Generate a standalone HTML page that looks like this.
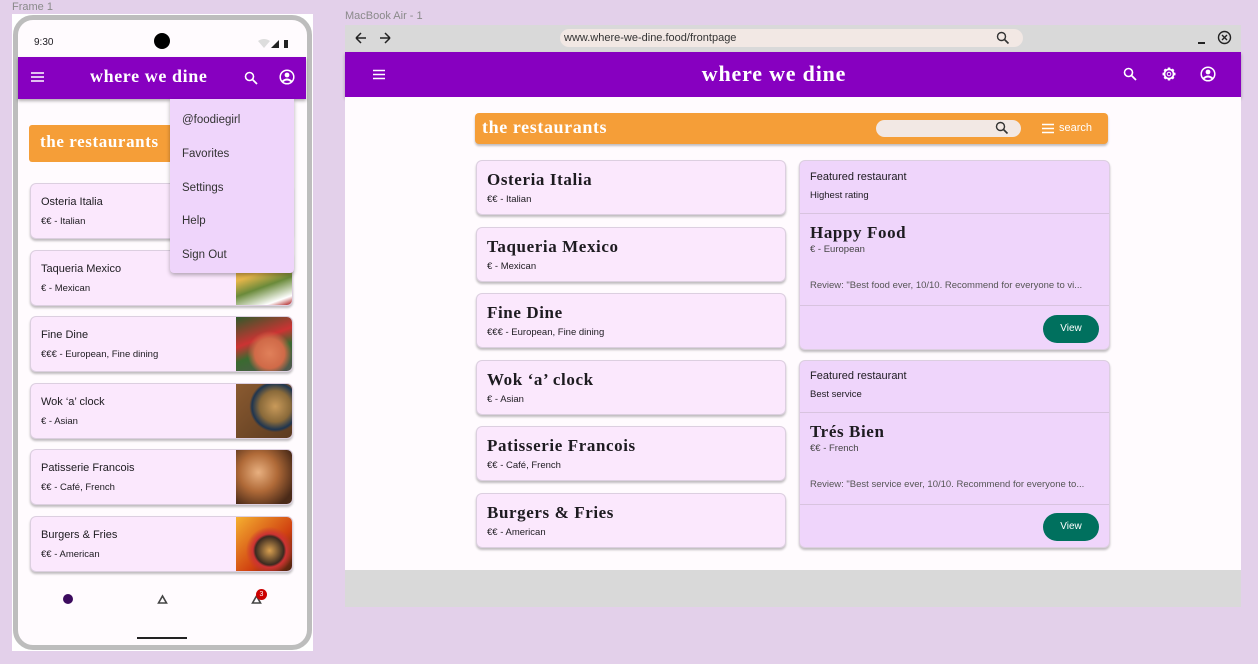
<!DOCTYPE html>
<html><head><meta charset="utf-8"><style>
*{box-sizing:border-box;margin:0;padding:0}
body{width:1258px;height:664px;background:#e3d0ea;font-family:"Liberation Sans",sans-serif;position:relative;overflow:hidden;color:#1d1b20}
.a{position:absolute}
.lbl{font-size:11px;color:#8a8a8a}
.serif{font-family:"Liberation Serif",serif;font-weight:bold}
.pc{position:absolute;left:30px;width:263px;height:56px;background:#fbe8fd;border:1px solid #dccfe0;border-radius:6px;box-shadow:0 2px 2px rgba(0,0,0,.25);overflow:hidden}
.pc .t{position:absolute;left:10px;top:12px;font-size:11px}
.pc .s{position:absolute;left:10px;top:32px;font-size:9.5px}
.pc .im{position:absolute;right:0;top:0;width:56px;height:56px}
.lc{position:absolute;left:476px;width:310px;height:55px;background:#fbe8fd;border:1px solid #dccfe0;border-radius:6px;box-shadow:0 2px 2px rgba(0,0,0,.25)}
.lc .t{position:absolute;left:10px;top:9px;font-size:17px;font-family:"Liberation Serif",serif;font-weight:bold;letter-spacing:.6px}
.lc .s{position:absolute;left:10px;top:33px;font-size:9.5px}
.fc{position:absolute;left:799px;width:311px;background:#efd5fb;border:1px solid #dccfe0;border-radius:6px;box-shadow:0 2px 2px rgba(0,0,0,.25)}
.fc .d{position:absolute;left:0;right:0;height:1px;background:#d8c3df}
.mi{position:absolute;left:12px;font-size:11.5px;color:#333}
.btn{position:absolute;right:10px;bottom:6px;width:56px;height:28px;border-radius:14px;background:#00705e;color:#fff;font-size:10px;text-align:center;line-height:28px}
</style></head><body>
<div class="a lbl" style="left:12px;top:1px">Frame 1</div>
<div class="a" style="left:12px;top:14px;width:301px;height:637px;background:#fff"></div>
<div class="a" style="left:13px;top:15px;width:299px;height:635px;border:5px solid #bdbdbd;border-radius:20px;background:#fffbfe"></div>
<div class="a" style="left:34px;top:37px;font-size:10px">9:30</div>
<div class="a" style="left:154px;top:33px;width:16px;height:16px;border-radius:50%;background:#000"></div>
<svg class="a" style="left:257px;top:37px" width="36" height="12"><path d="M1 4 Q7 0 13 4 L7 11Z" fill="#ddd"/><path d="M14 11 L22 3 L22 11Z" fill="#222"/><rect x="27" y="3" width="4" height="8" fill="#222"/></svg>
<div class="a" style="left:18px;top:57px;width:288px;height:42px;background:#8700c0;box-shadow:0 2px 3px rgba(0,0,0,.3)"></div>
<svg class="a" style="left:30px;top:71px" width="15" height="12"><path d="M1 2H14M1 6H14M1 10H14" stroke="#fff" stroke-width="1.6"/></svg>
<div class="a serif" style="left:90px;top:66px;font-size:18px;color:#fff;letter-spacing:.6px">where we dine</div>
<svg class="a" style="left:244px;top:71px" width="14" height="14"><circle cx="5.5" cy="5.5" r="4" stroke="#fff" stroke-width="1.6" fill="none"/><path d="M8.5 8.5L13 13" stroke="#fff" stroke-width="1.8"/></svg>
<svg class="a" style="left:279px;top:69px" width="16" height="16"><circle cx="8" cy="8" r="6.8" stroke="#fff" stroke-width="1.5" fill="none"/><circle cx="8" cy="6" r="2.4" fill="#fff"/><path d="M3.5 12.5Q8 8.5 12.5 12.5" stroke="#fff" stroke-width="2" fill="none"/></svg>
<div class="a" style="left:29px;top:125px;width:160px;height:37px;background:#f59e38;border-radius:3px"></div>
<div class="a serif" style="left:40px;top:132px;font-size:17px;color:#fff;letter-spacing:.6px">the restaurants</div>

<div class="pc" style="top:183px"><div class="t">Osteria Italia</div><div class="s">€€ - Italian</div></div>
<div class="pc" style="top:250px"><div class="t">Taqueria Mexico</div><div class="s">€ - Mexican</div><div class="im" style="background:linear-gradient(160deg,#c89a3a,#e4b54a 40%,#6a8a3a 60%,#fff 85%,#b44 95%)"></div></div>
<div class="pc" style="top:316px"><div class="t">Fine Dine</div><div class="s">€€€ - European, Fine dining</div><div class="im" style="background:radial-gradient(circle at 60% 65%,#e0805a 0,#d06a48 30%,transparent 45%),linear-gradient(160deg,#2f5a2a,#c33 40%,#3a6a30 60%,#555)"></div></div>
<div class="pc" style="top:383px"><div class="t">Wok ‘a’ clock</div><div class="s">€ - Asian</div><div class="im" style="background:radial-gradient(circle at 70% 40%,#c99a5a 0,#8a6a3a 30%,#1e3550 45%,transparent 50%),linear-gradient(135deg,#8a5a30,#5a3a20)"></div></div>
<div class="pc" style="top:449px"><div class="t">Patisserie Francois</div><div class="s">€€ - Café, French</div><div class="im" style="background:radial-gradient(circle at 40% 40%,#e8b080,#b06a38 40%,#4a2a18 80%)"></div></div>
<div class="pc" style="top:516px"><div class="t">Burgers &amp; Fries</div><div class="s">€€ - American</div><div class="im" style="background:radial-gradient(ellipse at 60% 60%,#d8a050 0,#3a2a20 30%,#c33 35%,transparent 50%),linear-gradient(135deg,#f5b030,#d04010 60%,#402010)"></div></div>

<div class="a" style="left:170px;top:99px;width:124px;height:174px;background:#efd5fb;border-radius:0 0 4px 4px;box-shadow:0 2px 4px rgba(0,0,0,.3)">
<div class="mi" style="top:15px">@foodiegirl</div><div class="mi" style="top:49px">Favorites</div><div class="mi" style="top:83px">Settings</div><div class="mi" style="top:116px">Help</div><div class="mi" style="top:150px">Sign Out</div></div>

<div class="a" style="left:63px;top:594px;width:10px;height:10px;border-radius:50%;background:#3c0a5e"></div>
<svg class="a" style="left:157px;top:594px" width="11" height="10"><path d="M1.5 9L5.5 2L9.5 9Z" stroke="#444" stroke-width="1.6" fill="none"/></svg>
<svg class="a" style="left:251px;top:594px" width="11" height="10"><path d="M1.5 9L5.5 2L9.5 9Z" stroke="#444" stroke-width="1.6" fill="none"/></svg>
<div class="a" style="left:256px;top:589px;width:11px;height:11px;border-radius:50%;background:#c00;color:#fff;font-size:7px;text-align:center;line-height:11px">3</div>
<div class="a" style="left:137px;top:637px;width:50px;height:2px;background:#222"></div>

<div class="a lbl" style="left:345px;top:10px">MacBook Air - 1</div>
<div class="a" style="left:345px;top:25px;width:896px;height:582px;background:#d9d9d9"></div>
<svg class="a" style="left:354px;top:31px" width="42" height="14"><path d="M2 7H12M2 7L7 2M2 7L7 12" stroke="#222" stroke-width="1.5" fill="none"/><path d="M26 7H36M36 7L31 2M36 7L31 12" stroke="#222" stroke-width="1.5" fill="none"/></svg>
<div class="a" style="left:560px;top:29px;width:463px;height:18px;background:#f2e8e4;border-radius:9px"></div>
<div class="a" style="left:564px;top:32px;font-size:11px;color:#333">www.where-we-dine.food/frontpage</div>
<svg class="a" style="left:996px;top:31px" width="14" height="14"><circle cx="5.5" cy="5.5" r="4" stroke="#333" stroke-width="1.4" fill="none"/><path d="M8.5 8.5L12.5 12.5" stroke="#333" stroke-width="1.6"/></svg>
<div class="a" style="left:1198px;top:42px;width:7px;height:1.5px;background:#222"></div>
<svg class="a" style="left:1217px;top:30px" width="15" height="15"><circle cx="7.5" cy="7.5" r="6" stroke="#222" stroke-width="1.4" fill="none"/><path d="M5 5L10 10M10 5L5 10" stroke="#222" stroke-width="1.4"/></svg>
<div class="a" style="left:345px;top:52px;width:896px;height:45px;background:#8700c0;box-shadow:0 2px 3px rgba(0,0,0,.3)"></div>
<div class="a" style="left:345px;top:97px;width:896px;height:473px;background:#fffbfe"></div>
<svg class="a" style="left:372px;top:69px" width="14" height="11"><path d="M1 1.5H13M1 5.5H13M1 9.5H13" stroke="#fff" stroke-width="1.5"/></svg>
<div class="a serif" style="left:345px;width:858px;top:61px;text-align:center;font-size:22px;color:#fff;letter-spacing:.8px">where we dine</div>
<svg class="a" style="left:1123px;top:67px" width="14" height="14"><circle cx="5.5" cy="5.5" r="4" stroke="#fff" stroke-width="1.6" fill="none"/><path d="M8.5 8.5L13 13" stroke="#fff" stroke-width="1.8"/></svg>
<svg class="a" style="left:1161px;top:66px" width="16" height="16"><g stroke="#fff" stroke-width="2.4"><path d="M8 1.5V4M8 12V14.5M1.5 8H4M12 8H14.5M3.4 3.4L5.2 5.2M10.8 10.8L12.6 12.6M3.4 12.6L5.2 10.8M10.8 5.2L12.6 3.4"/></g><circle cx="8" cy="8" r="4.6" stroke="#fff" stroke-width="1.8" fill="none"/><circle cx="8" cy="8" r="1.8" fill="none" stroke="#fff" stroke-width="1"/></svg>
<svg class="a" style="left:1200px;top:66px" width="16" height="16"><circle cx="8" cy="8" r="6.8" stroke="#fff" stroke-width="1.5" fill="none"/><circle cx="8" cy="6" r="2.4" fill="#fff"/><path d="M3.5 12.5Q8 8.5 12.5 12.5" stroke="#fff" stroke-width="2" fill="none"/></svg>

<div class="a" style="left:475px;top:113px;width:633px;height:31px;background:#f59e38;border-radius:4px;box-shadow:0 2px 2px rgba(0,0,0,.25)"></div>
<div class="a serif" style="left:482px;top:117px;font-size:18px;color:#fff;letter-spacing:.6px">the restaurants</div>
<div class="a" style="left:876px;top:120px;width:145px;height:17px;background:#f2e8e4;border-radius:9px"></div>
<svg class="a" style="left:995px;top:121px" width="14" height="14"><circle cx="5.5" cy="5.5" r="4" stroke="#333" stroke-width="1.4" fill="none"/><path d="M8.5 8.5L12.5 12.5" stroke="#333" stroke-width="1.6"/></svg>
<svg class="a" style="left:1041px;top:123px" width="14" height="11"><path d="M1 1.5H13M1 5.5H13M1 9.5H13" stroke="#fff" stroke-width="1.4"/></svg>
<div class="a" style="left:1059px;top:122px;font-size:11px;color:#fff">search</div>

<div class="lc" style="top:160px"><div class="t">Osteria Italia</div><div class="s">€€ - Italian</div></div>
<div class="lc" style="top:227px"><div class="t">Taqueria Mexico</div><div class="s">€ - Mexican</div></div>
<div class="lc" style="top:293px"><div class="t">Fine Dine</div><div class="s">€€€ - European, Fine dining</div></div>
<div class="lc" style="top:360px"><div class="t">Wok ‘a’ clock</div><div class="s">€ - Asian</div></div>
<div class="lc" style="top:426px"><div class="t">Patisserie Francois</div><div class="s">€€ - Café, French</div></div>
<div class="lc" style="top:493px"><div class="t">Burgers &amp; Fries</div><div class="s">€€ - American</div></div>

<div class="fc" style="top:160px;height:190px">
<div class="a" style="left:10px;top:10px;font-size:11px">Featured restaurant</div>
<div class="a" style="left:10px;top:29px;font-size:9.5px">Highest rating</div>
<div class="d" style="top:52px"></div>
<div class="a serif" style="left:10px;top:62px;font-size:17px;letter-spacing:.6px">Happy Food</div>
<div class="a" style="left:10px;top:83px;font-size:9.5px;color:#444">€ - European</div>
<div class="a" style="left:10px;top:119px;font-size:9.5px;color:#555;white-space:nowrap">Review: "Best food ever, 10/10. Recommend for everyone to vi...</div>
<div class="d" style="top:144px"></div>
<div class="btn">View</div></div>
<div class="fc" style="top:360px;height:188px">
<div class="a" style="left:10px;top:9px;font-size:11px">Featured restaurant</div>
<div class="a" style="left:10px;top:28px;font-size:9.5px">Best service</div>
<div class="d" style="top:51px"></div>
<div class="a serif" style="left:10px;top:61px;font-size:17px;letter-spacing:.6px">Trés Bien</div>
<div class="a" style="left:10px;top:82px;font-size:9.5px;color:#444">€€ - French</div>
<div class="a" style="left:10px;top:118px;font-size:9.5px;color:#555;white-space:nowrap">Review: "Best service ever, 10/10. Recommend for everyone to...</div>
<div class="d" style="top:143px"></div>
<div class="btn">View</div></div>
</body></html>
